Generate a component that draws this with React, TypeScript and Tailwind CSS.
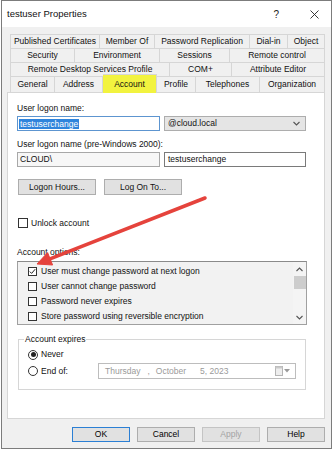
import React from "react";

type Tab = { label: string; w: string; active?: boolean };

const tabRows: Tab[][] = [
  [
    { label: "Published Certificates", w: "w-[90px]" },
    { label: "Member Of", w: "w-[55px]" },
    { label: "Password Replication", w: "w-[95px]" },
    { label: "Dial-in", w: "w-[38px]" },
    { label: "Object", w: "w-[37px]" },
  ],
  [
    { label: "Security", w: "w-[65px]" },
    { label: "Environment", w: "w-[85px]" },
    { label: "Sessions", w: "w-[70px]" },
    { label: "Remote control", w: "w-[95px]" },
  ],
  [
    { label: "Remote Desktop Services Profile", w: "w-[160px]" },
    { label: "COM+", w: "w-[62px]" },
    { label: "Attribute Editor", w: "w-[93px]" },
  ],
  [
    { label: "General", w: "w-[45px]" },
    { label: "Address", w: "w-[48px]" },
    { label: "Account", w: "w-[54px]", active: true },
    { label: "Profile", w: "w-[39px]" },
    { label: "Telephones", w: "w-[64px]" },
    { label: "Organization", w: "w-[65px]" },
  ],
];

const options = [
  { label: "User must change password at next logon", checked: true },
  { label: "User cannot change password", checked: false },
  { label: "Password never expires", checked: false },
  { label: "Store password using reversible encryption", checked: false },
];

function CheckBox({ checked, size = "w-[9px] h-[9px]" }: { checked?: boolean; size?: string }) {
  return (
    <span className={`${size} shrink-0 border border-[#333] bg-white flex items-center justify-center`}>
      {checked && (
        <svg width="7" height="7" viewBox="0 0 7 7">
          <path d="M0.8 3.6 L2.6 5.4 L6.2 1.2" fill="none" stroke="#222" strokeWidth="1" />
        </svg>
      )}
    </span>
  );
}

function Radio({ on }: { on?: boolean }) {
  return (
    <span className="w-[10px] h-[10px] shrink-0 rounded-full border border-[#333] bg-white flex items-center justify-center">
      {on && <span className="w-[5px] h-[5px] rounded-full bg-[#222]" />}
    </span>
  );
}

function Chevron({ up }: { up?: boolean }) {
  return (
    <svg width="7" height="5" viewBox="0 0 7 5">
      <path d={up ? "M0.5 4 L3.5 1 L6.5 4" : "M0.5 1 L3.5 4 L6.5 1"} fill="none" stroke="#555" strokeWidth="1.1" />
    </svg>
  );
}

function Button({ children, variant }: { children: React.ReactNode; variant?: "focus" | "disabled" }) {
  const look =
    variant === "focus"
      ? "border-[#2b7fd4] text-black"
      : variant === "disabled"
      ? "border-[#c4c4c4] bg-[#cccccc] text-[#a3a3a3]"
      : "border-[#adadad] text-black";
  return (
    <button className={`w-[58px] h-[15px] border bg-[#e1e1e1] flex items-center justify-center leading-none ${look}`}>
      {children}
    </button>
  );
}

export default function App() {
  return (
    <div className="relative w-[333px] h-[450px] bg-white overflow-hidden font-['Liberation_Sans',Arial,sans-serif] text-[8.5px] text-[#111]">
      <div className="ml-px w-[331px] h-[449px] border border-[#7c7c7c] bg-[#f0f0f0] flex flex-col">
        {/* title bar */}
        <div className="h-[26px] bg-white flex items-center pl-[5px] pr-[12px]">
          <span className="text-[9.5px] text-[#111]">testuser Properties</span>
          <span className="ml-auto text-[10px] text-[#222] mr-[31px]">?</span>
          <svg width="9" height="9" viewBox="0 0 9 9">
            <path d="M0.5 0.5 L8.5 8.5 M8.5 0.5 L0.5 8.5" stroke="#222" strokeWidth="0.9" />
          </svg>
        </div>

        {/* tabs */}
        <div className="mt-[7px] ml-[8px] flex flex-col">
          {tabRows.map((row, ri) => (
            <div key={ri} className={`flex ${ri === 3 ? "h-[16px] items-start" : "h-[14px]"}`}>
              {row.map((t, ti) => (
                <div
                  key={t.label}
                  className={`${t.w} ${ti === 0 ? "border-l" : ""} border-t border-r border-[#d6d6d6] flex items-center justify-center whitespace-nowrap ${
                    t.active
                      ? "relative z-10 -mt-[2px] h-[19px] bg-[#f2f33f] border-[#c9c94a]"
                      : ri === 3
                      ? "h-[16px] bg-[#f0f0f0]"
                      : "h-[14px] bg-[#f0f0f0]"
                  }`}
                >
                  {t.label}
                </div>
              ))}
            </div>
          ))}
        </div>

        {/* tab panel */}
        <div className="ml-[5px] w-[318px] h-[327px] bg-white border border-[#d6d6d6] flex flex-col pl-[9px] pr-[17px] pt-[10px]">
          <div className="leading-[10px]">User logon name:</div>
          <div className="mt-[3px] flex gap-[4px] h-[15px]">
            <div className="w-[143px] border border-[#5d95d0] bg-white flex items-center pl-px">
              <span className="bg-[#2f84dc] text-white leading-[10px] px-px">testuserchange</span>
            </div>
            <div className="w-[142px] border border-[#adadad] bg-[#e5e5e5] flex items-center pl-[3px] pr-[5px]">
              <span>@cloud.local</span>
              <span className="ml-auto">
                <Chevron />
              </span>
            </div>
          </div>

          <div className="mt-[8px] leading-[10px]">User logon name (pre-Windows 2000):</div>
          <div className="mt-[3px] flex gap-[4px] h-[15px]">
            <div className="w-[143px] border border-[#a8a8a8] bg-[#f7f7f7] flex items-center pl-[2px]">CLOUD\</div>
            <div className="w-[142px] border border-[#7a7a7a] bg-white flex items-center pl-[3px]">testuserchange</div>
          </div>

          <div className="mt-[12px] flex gap-[8px] ml-px">
            <button className="w-[78px] h-[16px] border border-[#adadad] bg-[#e1e1e1]">Logon Hours...</button>
            <button className="w-[78px] h-[16px] border border-[#adadad] bg-[#e1e1e1]">Log On To...</button>
          </div>

          <div className="mt-[23px] ml-px flex items-center gap-[3px] h-[10px]">
            <CheckBox size="w-[10px] h-[10px]" />
            <span>Unlock account</span>
          </div>

          <div className="mt-[19px] leading-[10px]">Account options:</div>
          <div className="mt-[4px] w-[290px] h-[64px] border border-[#a0a0a0] border-t-[#8a8a8a] bg-[#f2f2f2] flex">
            <div className="flex-1 flex flex-col pt-[2px] pl-[10px]">
              {options.map((o) => (
                <div key={o.label} className="h-[15px] flex items-center gap-[4px]">
                  <CheckBox checked={o.checked} />
                  <span>{o.label}</span>
                </div>
              ))}
            </div>
            <div className="w-[13px] bg-[#f4f4f4] flex flex-col items-center">
              <div className="h-[14px] flex items-center justify-center">
                <Chevron up />
              </div>
              <div className="w-[12px] h-[13px] bg-[#cdcdcd]" />
              <div className="mt-auto h-[14px] flex items-center justify-center">
                <Chevron />
              </div>
            </div>
          </div>

          <fieldset className="mt-[9px] ml-px w-[288px] h-[56px] border border-[#d6d6d6] pl-[9px]">
            <legend className="-ml-[4px] px-px leading-[10px]">Account expires</legend>
            <div className="mt-[5px] h-[11px] flex items-center gap-[3px]">
              <Radio on />
              <span>Never</span>
            </div>
            <div className="mt-[3px] h-[16px] flex items-center">
              <div className="w-[70px] flex items-center gap-[3px]">
                <Radio />
                <span>End of:</span>
              </div>
              <div className="w-[198px] h-[16px] border border-[#bdbdbd] bg-white flex items-center pl-[6px] pr-[5px] text-[#9a9a9a]">
                <span>Thursday</span>
                <span className="ml-[7px]">,</span>
                <span className="ml-[6px]">October</span>
                <span className="ml-[14px]">5, 2023</span>
                <span className="ml-auto flex items-center gap-[1px]">
                  <svg width="8" height="10" viewBox="0 0 8 10">
                    <rect x="0.5" y="0.5" width="7" height="9" fill="#eeeeee" stroke="#b5b5b5" />
                    <rect x="0.5" y="0.5" width="7" height="2" fill="#c9c9c9" />
                  </svg>
                  <svg width="6" height="4" viewBox="0 0 6 4">
                    <path d="M0 0 L6 0 L3 3.5 Z" fill="#9a9a9a" />
                  </svg>
                </span>
              </div>
            </div>
          </fieldset>
        </div>

        {/* dialog buttons */}
        <div className="mt-[8px] flex justify-end gap-[7px] pr-[6px]">
          <Button variant="focus">OK</Button>
          <Button>Cancel</Button>
          <Button variant="disabled">Apply</Button>
          <Button>Help</Button>
        </div>
      </div>

      {/* red annotation arrow */}
      <svg className="absolute inset-0 pointer-events-none" width="333" height="450" viewBox="0 0 333 450">
        <line x1="205" y1="198" x2="50" y2="258.9" stroke="#e5433c" strokeWidth="3.5" strokeLinecap="round" />
        <path d="M37 264 L52.6 265 L47.6 252.6 Z" fill="#e5433c" stroke="#e5433c" strokeWidth="1" strokeLinejoin="round" />
      </svg>
    </div>
  );
}
